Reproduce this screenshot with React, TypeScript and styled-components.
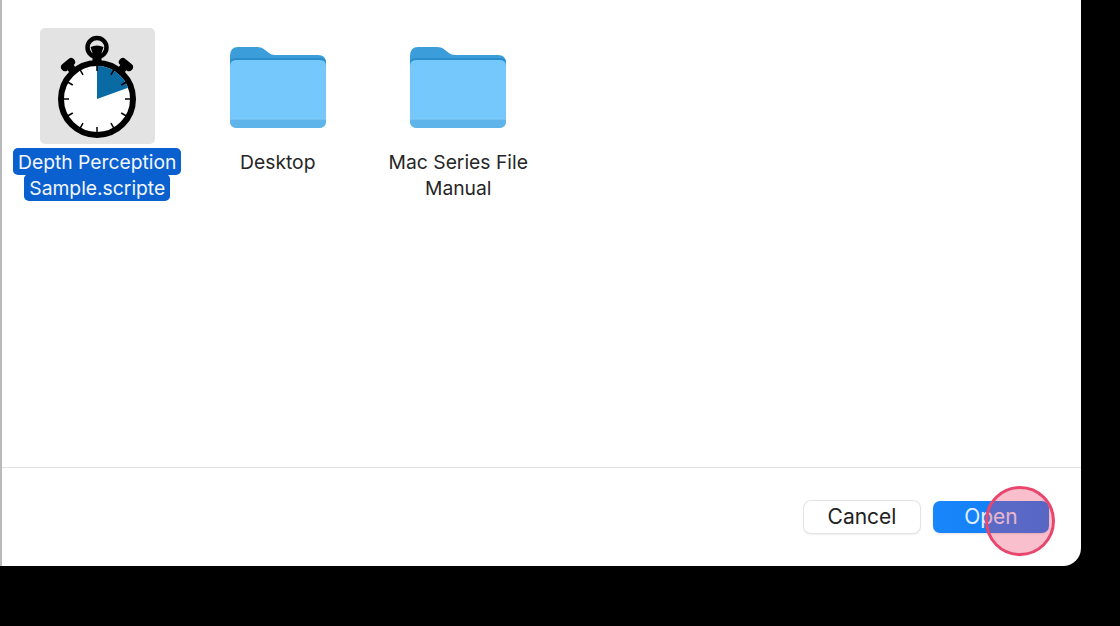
import React from 'react'
import styled, { createGlobalStyle } from 'styled-components'

const GlobalStyle = createGlobalStyle`
  html, body {
    margin: 0;
    padding: 0;
    background: #000;
  }
  body {
    font-family: Inter, "Liberation Sans", sans-serif;
    -webkit-font-smoothing: antialiased;
  }
`

const Screen = styled.div`
  width: 1120px;
  height: 626px;
  overflow: hidden;
  background: #000;
`

const Dialog = styled.div`
  box-sizing: border-box;
  width: 1081px;
  height: 566px;
  display: flex;
  flex-direction: column;
  background: #fff;
  border-left: 2px solid #b9b9b9;
  border-bottom-right-radius: 18px;
`

const FileGrid = styled.div`
  flex: 1;
  display: grid;
  grid-template-columns: repeat(3, 180.5px);
  align-content: start;
  padding: 28px 0 0 5px;
`

const FileItem = styled.div`
  display: flex;
  flex-direction: column;
  align-items: center;
`

const IconTile = styled.div<{ $selected?: boolean }>`
  width: 115px;
  height: 116px;
  display: flex;
  align-items: center;
  justify-content: center;
  border-radius: 5px;
  background: ${({ $selected }) => ($selected ? '#e3e3e3' : 'transparent')};
`

const FileName = styled.div`
  margin-top: 5px;
  width: 176px;
  text-align: center;
  font-size: 19.3px;
  line-height: 26px;
  color: #262626;
`

const SelectedLine = styled.span`
  display: inline-block;
  padding: 0 5px;
  border-radius: 5px;
  background: #0b60d0;
  box-shadow: 0 -1px 0 #0b60d0;
  color: #f2f7ff;
`

const Footer = styled.div`
  height: 99px;
  display: flex;
  justify-content: flex-end;
  gap: 13px;
  padding: 33px 32px 0 0;
  box-sizing: border-box;
  border-top: 1px solid #e2e2e2;
`

const Button = styled.div<{ $primary?: boolean }>`
  position: relative;
  box-sizing: border-box;
  width: 116px;
  height: 32px;
  padding-bottom: 2px;
  display: flex;
  align-items: center;
  justify-content: center;
  border-radius: 7px;
  font-size: 21px;
  color: ${({ $primary }) => ($primary ? '#e6f1ff' : '#222')};
  background: ${({ $primary }) =>
    $primary ? 'linear-gradient(90deg, #1a86fb 0%, #0f7bf4 100%)' : '#fff'};
  box-shadow: ${({ $primary }) =>
    $primary ? '0 1px 2px rgba(0, 0, 0, 0.12)' : '0 0 0 1px #e4e4e4, 0 1px 2px rgba(0, 0, 0, 0.18)'};
`

const ClickMarker = styled.div`
  position: absolute;
  left: 52px;
  top: -15px;
  box-sizing: border-box;
  width: 70px;
  height: 70px;
  border-radius: 50%;
  border: 3px solid #e8466c;
  background: rgba(236, 60, 100, 0.33);
`

const StopwatchIcon = () => {
  const ticks = Array.from({ length: 12 }, (_, i) => i * 30)

  return (
    <svg width="100" height="116" viewBox="0 0 100 116">
      <circle cx="50" cy="19.5" r="9.5" fill="none" stroke="#000" strokeWidth="4.5" />
      <path d="M43.5 19 Q50 16 56.5 19 L54.5 25 V38 H45.5 V25 Z" fill="#000" />
      <g transform="rotate(-40 50 71)">
        <rect x="46" y="28" width="8" height="10" fill="#000" />
        <rect x="42" y="22" width="16" height="8" rx="4" fill="#000" />
      </g>
      <g transform="rotate(40 50 71)">
        <rect x="46" y="28" width="8" height="10" fill="#000" />
        <rect x="42" y="22" width="16" height="8" rx="4" fill="#000" />
      </g>
      <circle cx="50" cy="71" r="36" fill="#fff" stroke="#000" strokeWidth="6" />
      <path d="M50 71 L50 38 A33 33 0 0 1 81 59.7 Z" fill="#0a6aa3" />
      {ticks.map((angle) => (
        <line
          key={angle}
          x1="50"
          y1="37"
          x2="50"
          y2="43"
          stroke="#000"
          strokeWidth="1.5"
          transform={`rotate(${angle} 50 71)`}
        />
      ))}
    </svg>
  )
}

const FolderIcon = () => (
  <svg width="98" height="84" viewBox="0 0 98 84">
    <path
      d="M1 12 Q1 3 9 3 H28 Q33 3 36 6 L40 9 Q42 11 46 11 H89 Q97 11 97 19 V40 H1 Z"
      fill="#3b9edb"
    />
    <path d="M1 19 Q1 14 7 14 H91 Q97 14 97 19 V40 H1 Z" fill="#2a8ccb" />
    <path
      d="M1 22 Q1 16 7 16 H91 Q97 16 97 22 V77 Q97 84 90 84 H8 Q1 84 1 77 Z"
      fill="#74c8fb"
    />
    <path d="M1 75 H97 V77 Q97 84 90 84 H8 Q1 84 1 77 Z" fill="#5fb5ea" />
    <line x1="1" y1="75" x2="97" y2="75" stroke="#84cdf8" strokeWidth="1" />
  </svg>
)

const App = () => {
  return (
    <Screen>
      <GlobalStyle />
      <Dialog>
        <FileGrid>
          <FileItem>
            <IconTile $selected>
              <StopwatchIcon />
            </IconTile>
            <FileName>
              <SelectedLine>Depth Perception</SelectedLine>
              <SelectedLine>Sample.scripte</SelectedLine>
            </FileName>
          </FileItem>
          <FileItem>
            <IconTile>
              <FolderIcon />
            </IconTile>
            <FileName>Desktop</FileName>
          </FileItem>
          <FileItem>
            <IconTile>
              <FolderIcon />
            </IconTile>
            <FileName>Mac Series File Manual</FileName>
          </FileItem>
        </FileGrid>
        <Footer>
          <Button>Cancel</Button>
          <Button $primary>
            Open
            <ClickMarker />
          </Button>
        </Footer>
      </Dialog>
    </Screen>
  )
}

export default App
